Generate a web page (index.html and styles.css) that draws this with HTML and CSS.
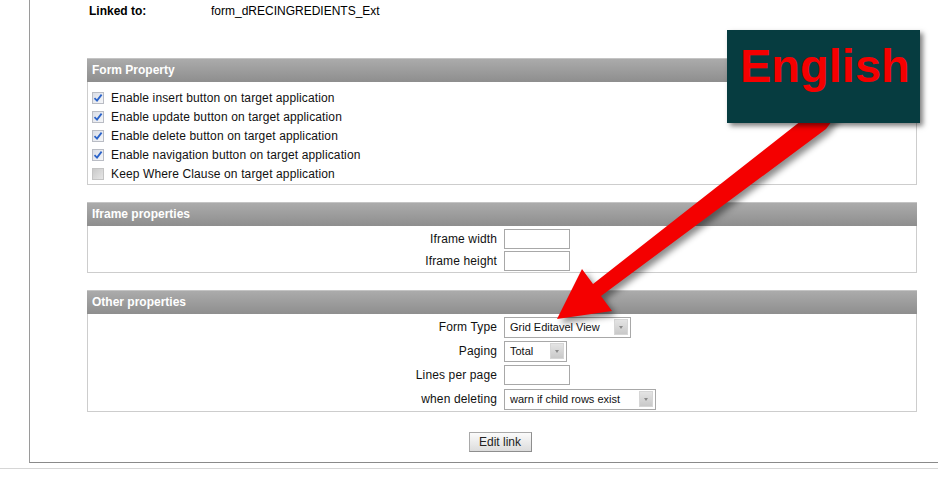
FILE: index.html
```
<!DOCTYPE html>
<html>
<head>
<meta charset="utf-8">
<link rel="stylesheet" href="styles.css">
</head>
<body>
<div class="frame">
  <div class="linked"><span class="lbl">Linked to:</span><span class="val">form_dRECINGREDIENTS_Ext</span></div>

  <div class="panel">
    <div class="phead">Form Property</div>
    <div class="pbody checks">
      <div class="chk"><span class="cb on"><svg viewBox="0 0 12 12" width="12" height="12"><path d="M2.5 6.2 L5 8.6 L9.6 2.6" fill="none" stroke="#2b63c9" stroke-width="1.8"/></svg></span>Enable insert button on target application</div>
      <div class="chk"><span class="cb on"><svg viewBox="0 0 12 12" width="12" height="12"><path d="M2.5 6.2 L5 8.6 L9.6 2.6" fill="none" stroke="#2b63c9" stroke-width="1.8"/></svg></span>Enable update button on target application</div>
      <div class="chk"><span class="cb on"><svg viewBox="0 0 12 12" width="12" height="12"><path d="M2.5 6.2 L5 8.6 L9.6 2.6" fill="none" stroke="#2b63c9" stroke-width="1.8"/></svg></span>Enable delete button on target application</div>
      <div class="chk"><span class="cb on"><svg viewBox="0 0 12 12" width="12" height="12"><path d="M2.5 6.2 L5 8.6 L9.6 2.6" fill="none" stroke="#2b63c9" stroke-width="1.8"/></svg></span>Enable navigation button on target application</div>
      <div class="chk"><span class="cb off"></span>Keep Where Clause on target application</div>
    </div>
  </div>

  <div class="panel">
    <div class="phead">Iframe properties</div>
    <div class="pbody grid g-iframe">
      <div class="flabel">Iframe width</div><div class="fctl"><span class="inp"></span></div>
      <div class="flabel">Iframe height</div><div class="fctl"><span class="inp"></span></div>
    </div>
  </div>

  <div class="panel">
    <div class="phead">Other properties</div>
    <div class="pbody grid g-other">
      <div class="flabel">Form Type</div><div class="fctl"><span class="sel w127"><span class="stext">Grid Editavel View</span><span class="sarr"></span></span></div>
      <div class="flabel">Paging</div><div class="fctl"><span class="sel w63"><span class="stext">Total</span><span class="sarr"></span></span></div>
      <div class="flabel">Lines per page</div><div class="fctl"><span class="inp"></span></div>
      <div class="flabel">when deleting</div><div class="fctl"><span class="sel w152"><span class="stext">warn if child rows exist</span><span class="sarr"></span></span></div>
    </div>
  </div>

  <div class="actions"><span class="btn">Edit link</span></div>
</div>
<div class="footline"></div>

<svg class="arrow" width="938" height="480" viewBox="0 0 938 480">
  <g class="arrow-g">
    <polygon points="838,113 826,129 601,296 612,311 557,319 582,269 593,284 820,106" fill="#f40000"/>
  </g>
</svg>
<div class="callout">English</div>
</body>
</html>
```
FILE: styles.css
```
html, body {
  margin: 0;
  padding: 0;
  background: #ffffff;
}
body {
  font-family: "Liberation Sans", Arial, sans-serif;
  font-size: 12px;
  color: #000;
  width: 938px;
  height: 480px;
  overflow: hidden;
  position: relative;
}
.frame {
  margin-left: 29px;
  height: 463px;
  box-sizing: border-box;
  border-left: 1px solid #9a9a9a;
  border-bottom: 1px solid #8a8a8a;
  padding-left: 57px;
  padding-top: 4px;
}
.linked {
  display: flex;
  line-height: 15px;
  padding-left: 2px;
  margin-bottom: 39px;
}
.linked .lbl {
  width: 122px;
  font-weight: bold;
}
.panel {
  width: 830px;
  box-sizing: border-box;
  border: 1px solid #cdcdcd;
  margin-bottom: 17px;
}
.phead {
  height: 23px;
  line-height: 23px;
  background: linear-gradient(#ababab, #8e8e8e);
  color: #fff;
  font-weight: bold;
  padding-left: 5px;
  margin: -1px -1px 0 -1px;
  border-top: 1px solid #c4c4c4;
}
.checks {
  padding: 6px 0 1px 4px;
}
.chk {
  height: 19px;
  display: flex;
  align-items: center;
  color: #111;
  letter-spacing: 0.13px;
}
.cb {
  width: 12px;
  height: 12px;
  box-sizing: border-box;
  margin-right: 7px;
  display: inline-flex;
  position: relative;
}
.cb.on {
  background: linear-gradient(135deg, #d9dde6, #f5f6f8);
  border: 1px solid #b9bcc4;
}
.cb.on svg {
  position: absolute;
  left: -1px;
  top: -1px;
}
.cb.off {
  background: linear-gradient(135deg, #c9c9c9, #e6e6e6);
  border: 1px solid #c4c4c4;
}
.grid {
  display: grid;
  grid-template-columns: 414px 1fr;
}
.g-iframe {
  padding: 2px 0 0 0;
  grid-auto-rows: 22px;
}
.g-other {
  padding: 1px 0 0 0;
  grid-auto-rows: 24px;
}
.flabel {
  text-align: right;
  padding-right: 5px;
  display: flex;
  align-items: center;
  justify-content: flex-end;
  color: #111;
  letter-spacing: 0.13px;
}
.fctl {
  display: flex;
  align-items: center;
  padding-left: 2px;
}
.inp {
  width: 66px;
  height: 20px;
  box-sizing: border-box;
  border: 1px solid #a8a8a8;
  background: #fff;
}
.sel {
  height: 21px;
  box-sizing: border-box;
  border: 1px solid #a8a8a8;
  background: #fff;
  display: flex;
  align-items: center;
  justify-content: space-between;
  padding: 0 2px 0 5px;
  font-size: 11px;
  color: #111;
}
.w127 { width: 127px; }
.w63 { width: 63px; }
.w152 { width: 152px; }
.sarr {
  width: 14px;
  height: 16px;
  box-sizing: border-box;
  background: linear-gradient(#e4e4e4, #c9c9c9);
  border: 1px solid #d6d6d6;
  position: relative;
}
.sarr::after {
  content: "";
  position: absolute;
  left: 4px;
  top: 6px;
  border-left: 2.5px solid transparent;
  border-right: 2.5px solid transparent;
  border-top: 3px solid #8a8a8a;
}
.actions {
  width: 830px;
  display: flex;
  justify-content: center;
  padding-top: 3px;
}
.btn {
  width: 63px;
  height: 20px;
  box-sizing: border-box;
  border: 1px solid #a9a9a9;
  border-right-color: #8e8e8e;
  border-bottom-color: #8e8e8e;
  background: linear-gradient(#fbfbfb, #dcdcdc);
  display: flex;
  align-items: center;
  justify-content: center;
  color: #222;
  margin-right: 4px;
}
.footline {
  margin-top: 5px;
  height: 1px;
  background: #d6d6d6;
}
.arrow {
  position: absolute;
  left: 0;
  top: 0;
  pointer-events: none;
}
.arrow-g {
  filter: drop-shadow(4px 4px 3px rgba(0, 0, 0, 0.45));
}
.callout {
  position: absolute;
  left: 727px;
  top: 30px;
  width: 193px;
  height: 93px;
  box-sizing: border-box;
  background: #063c40;
  box-shadow: 3px 3px 5px rgba(0, 0, 0, 0.5);
  color: #f50000;
  font-family: "Liberation Sans", Arial, sans-serif;
  font-weight: bold;
  font-size: 47px;
  line-height: 47px;
  padding: 12px 0 0 13px;
}
```
